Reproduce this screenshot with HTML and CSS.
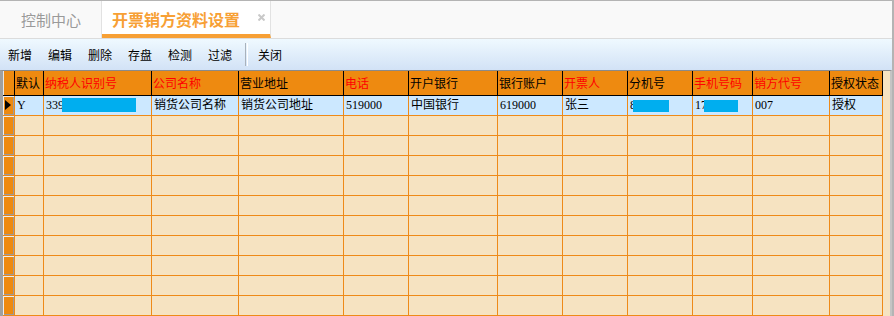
FILE: index.html
```html
<!DOCTYPE html>
<html lang="zh-CN">
<head>
  <meta charset="UTF-8">
  <title>开票销方资料设置</title>
  <link rel="stylesheet" href="styles.css">
</head>
<body>
  <div class="app">

    <div class="tabs">
      <div class="tab">控制中心</div>
      <div class="tab active">开票销方资料设置
        <span class="close">
          <svg width="7" height="7" viewBox="0 0 7 7"><path d="M0.5 0.5 L6.5 6.5 M6.5 0.5 L0.5 6.5" stroke="#c9c9c9" stroke-width="2"/></svg>
        </span>
      </div>
    </div>

    <div class="toolbar">
      <div class="group">
        <span class="tool">新增</span>
        <span class="tool">编辑</span>
        <span class="tool">删除</span>
        <span class="tool">存盘</span>
        <span class="tool">检测</span>
        <span class="tool">过滤</span>
      </div>
      <span class="sep"></span>
      <div class="group">
        <span class="tool">关闭</span>
      </div>
    </div>

    <div class="grid">
      <div class="row head">
        <div class="ind"></div>
        <div>默认</div>
        <div class="red">纳税人识别号</div>
        <div class="red">公司名称</div>
        <div>营业地址</div>
        <div class="red">电话</div>
        <div>开户银行</div>
        <div>银行账户</div>
        <div class="red">开票人</div>
        <div>分机号</div>
        <div class="red">手机号码</div>
        <div class="red">销方代号</div>
        <div>授权状态</div>
      </div>

      <div class="row sel">
        <div class="ind"><span class="arrow"></span></div>
        <div>Y</div>
        <div>339<span class="mask m-tax"></span></div>
        <div>销货公司名称</div>
        <div>销货公司地址</div>
        <div>519000</div>
        <div>中国银行</div>
        <div>619000</div>
        <div>张三</div>
        <div>8<span class="mask m-ext"></span></div>
        <div>17<span class="mask m-mob"></span></div>
        <div>007</div>
        <div>授权</div>
      </div>

      <div class="row"><div class="ind"></div><div></div><div></div><div></div><div></div><div></div><div></div><div></div><div></div><div></div><div></div><div></div><div></div></div>
      <div class="row"><div class="ind"></div><div></div><div></div><div></div><div></div><div></div><div></div><div></div><div></div><div></div><div></div><div></div><div></div></div>
      <div class="row"><div class="ind"></div><div></div><div></div><div></div><div></div><div></div><div></div><div></div><div></div><div></div><div></div><div></div><div></div></div>
      <div class="row"><div class="ind"></div><div></div><div></div><div></div><div></div><div></div><div></div><div></div><div></div><div></div><div></div><div></div><div></div></div>
      <div class="row"><div class="ind"></div><div></div><div></div><div></div><div></div><div></div><div></div><div></div><div></div><div></div><div></div><div></div><div></div></div>
      <div class="row"><div class="ind"></div><div></div><div></div><div></div><div></div><div></div><div></div><div></div><div></div><div></div><div></div><div></div><div></div></div>
      <div class="row"><div class="ind"></div><div></div><div></div><div></div><div></div><div></div><div></div><div></div><div></div><div></div><div></div><div></div><div></div></div>
      <div class="row"><div class="ind"></div><div></div><div></div><div></div><div></div><div></div><div></div><div></div><div></div><div></div><div></div><div></div><div></div></div>
      <div class="row"><div class="ind"></div><div></div><div></div><div></div><div></div><div></div><div></div><div></div><div></div><div></div><div></div><div></div><div></div></div>
      <div class="row"><div class="ind"></div><div></div><div></div><div></div><div></div><div></div><div></div><div></div><div></div><div></div><div></div><div></div><div></div></div>
    </div>

  </div>
</body>
</html>
```

FILE: styles.css
```css
body {
  margin: 0;
  width: 894px;
  height: 316px;
  overflow: hidden;
  background: #fff;
  font-family: "Noto Sans CJK SC", sans-serif;
  color: #000;
}
.app {
  width: 892px;
  border-right: 2px solid #b4b4b4;
}

/* tab strip */
.tabs {
  display: flex;
  height: 37px;
  background: #f9f9f9;
  border-top: 1px solid #b4b4b4;
  border-bottom: 1px solid #dcdcdc;
}
.tab {
  box-sizing: border-box;
  display: flex;
  align-items: center;
  width: 102px;
  padding-left: 21px;
  border-right: 1px solid #e2e2e2;
  font-size: 15px;
  color: #9a9a9a;
}
.tab.active {
  width: 169px;
  padding-left: 10px;
  padding-top: 3px;
  background: #fff;
  border-bottom: 4px solid #f7a035;
  font-size: 16px;
  font-weight: bold;
  color: #f7a035;
}
.close {
  display: flex;
  margin-left: auto;
  margin-right: 5px;
  margin-bottom: 3px;
}

/* toolbar */
.toolbar {
  display: flex;
  align-items: center;
  height: 31px;
  padding-left: 8px;
  background: linear-gradient(#eff9ff, #d2e2f6);
  font-size: 12px;
}
.group {
  display: flex;
  gap: 16px;
}
.tool {
  line-height: 14px;
  white-space: nowrap;
}
.sep {
  width: 1px;
  height: 23px;
  margin: 0 10px 0 13px;
  border-left: 1px solid #a9b2bc;
  border-right: 1px solid #fff;
}

/* grid */
.grid {
  height: 245px;
  overflow: hidden;
  background: #f6e3c1;
  border-top: 1px solid #8a8a8a;
  border-left: 3px solid #a0a0a0;
  border-right: 2px solid #c4c4c4;
}
.row {
  display: grid;
  grid-template-columns: 12px 29px 108px 87px 105px 65px 89px 65px 65px 65px 60px 77px 53px;
  height: 20px;
  font-size: 12px;
}
.row > div {
  box-sizing: border-box;
  border-right: 1px solid #ee8a18;
  border-bottom: 1px solid #ee8a18;
  padding-left: 2px;
  line-height: 19px;
  white-space: nowrap;
  overflow: hidden;
  font-family: "Liberation Serif", "Noto Sans CJK SC", serif;
}
.row.head {
  height: 25px;
}
.row.head > div {
  background: #ee8a10;
  border-color: #000;
  padding-left: 1px;
  line-height: 23px;
  font-family: "Noto Sans CJK SC", sans-serif;
}
.row.head .red {
  color: #ff0000;
}
.row.sel > div {
  background: #cce8ff;
}
.row > .ind,
.row.sel > .ind {
  padding: 0;
  background: #ee8a10;
  box-shadow: inset 1px 1px 0 #eeeeee, inset -1px -1px 0 #9c9c9c;
}
.row.head > .ind {
  box-shadow: inset 1px 0 0 #e8e8e8;
}
.arrow {
  display: block;
  width: 0;
  height: 0;
  margin: 4px 0 0 2px;
  border-left: 6px solid #000;
  border-top: 5px solid transparent;
  border-bottom: 5px solid transparent;
}
.mask {
  display: inline-block;
  height: 14px;
  vertical-align: -3px;
  background: #00aeef;
}
.m-tax {
  width: 74px;
  margin-left: -2px;
}
.m-ext {
  width: 36px;
  height: 12px;
  margin-left: -3px;
}
.m-mob {
  width: 34px;
  height: 12px;
  margin-left: -3px;
}
```
